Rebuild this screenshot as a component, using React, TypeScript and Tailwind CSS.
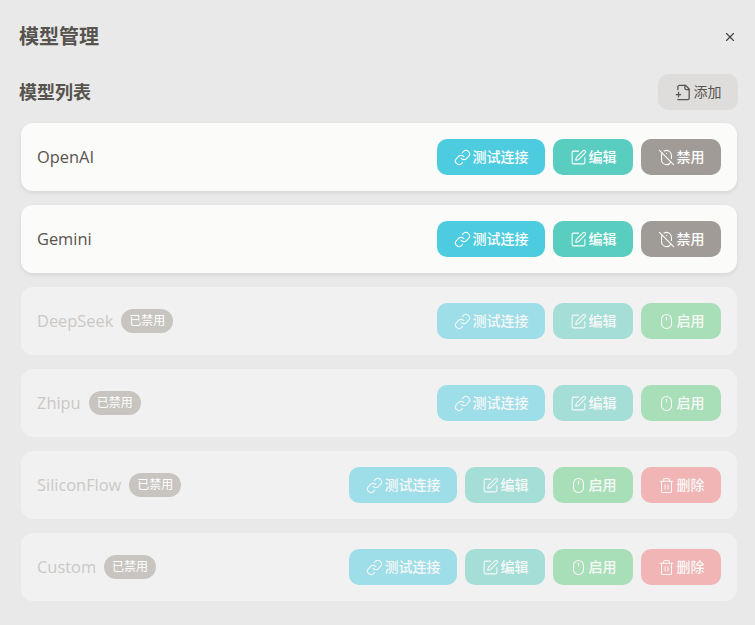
import { Link, Mouse, MouseOff, SquarePen, Trash2, X } from "lucide-react";

const font = "font-['Open_Sans','Noto_Sans_CJK_SC',sans-serif]";

const models = [
  { name: "OpenAI", enabled: true, removable: false },
  { name: "Gemini", enabled: true, removable: false },
  { name: "DeepSeek", enabled: false, removable: false },
  { name: "Zhipu", enabled: false, removable: false },
  { name: "SiliconFlow", enabled: false, removable: true },
  { name: "Custom", enabled: false, removable: true },
];

const ActionButton = ({ icon: Icon, label, color, width }: any) => (
  <button
    className={`${color} ${width} h-9 rounded-[10px] flex items-center justify-center gap-0.5 text-white text-sm font-medium`}
  >
    <Icon className="h-[17px] w-[17px]" strokeWidth={1.5} />
    <span>{label}</span>
  </button>
);

const ModelRow = ({ model }: any) => (
  <div
    className={`h-[68px] rounded-xl pl-4 pr-4 flex items-center justify-between ${
      model.enabled ? "bg-[#fbfbf9] shadow-[0_2px_4px_rgba(0,0,0,0.08)]" : "bg-[#f1f1f1]"
    }`}
  >
    <div className="flex items-center gap-2">
      <span className={`text-[16.4px] ${model.enabled ? "text-[#57534e]" : "text-[#cbc8c5]"}`}>
        {model.name}
      </span>
      {!model.enabled && (
        <span className="h-6 w-[52px] rounded-full bg-[#c8c5c1] text-white text-xs flex items-center justify-center">
          已禁用
        </span>
      )}
    </div>
    <div className={`flex gap-2 ${model.enabled ? "" : "opacity-50"}`}>
      <ActionButton icon={Link} label="测试连接" color="bg-[#4dcce0]" width="w-[108px]" />
      <ActionButton icon={SquarePen} label="编辑" color="bg-[#59cdbf]" width="w-20" />
      {model.enabled ? (
        <ActionButton icon={MouseOff} label="禁用" color="bg-[#a09b96]" width="w-20" />
      ) : (
        <ActionButton icon={Mouse} label="启用" color="bg-[#62cf80]" width="w-20" />
      )}
      {model.removable && (
        <ActionButton icon={Trash2} label="删除" color="bg-[#f07a78]" width="w-20" />
      )}
    </div>
  </div>
);

export default function App() {
  return (
    <div className={`${font} w-[755px] h-[625px] bg-[#e9e9e9] overflow-hidden`}>
      <div className="h-[74px] pl-[19px] pr-[18px] flex items-center justify-between">
        <h1 className="text-xl font-bold text-[#57534e]">模型管理</h1>
        <X className="h-[14px] w-[14px] text-[#44403c]" strokeWidth={2} />
      </div>
      <div className="pl-[19px] pr-[17px] flex items-center justify-between h-9">
        <h2 className="text-lg font-bold text-[#57534e]">模型列表</h2>
        <button className="w-20 h-9 rounded-[10px] bg-[#dedddb] flex items-center justify-center gap-0.5 text-sm text-[#57534e]">
          {/* file with the plus on its left edge */}
          <svg
            className="h-[17px] w-[17px]"
            viewBox="0 0 24 24"
            fill="none"
            stroke="currentColor"
            strokeWidth={1.8}
            strokeLinecap="round"
            strokeLinejoin="round"
          >
            <path d="M4 22h14a2 2 0 0 0 2-2V7l-5-5H6a2 2 0 0 0-2 2v4" />
            <path d="M14 2v4a2 2 0 0 0 2 2h4" />
            <path d="M2 15h6" />
            <path d="M5 12v6" />
          </svg>
          添加
        </button>
      </div>
      <div className="mt-[13px] ml-[21px] mr-[18px] flex flex-col gap-[14px]">
        {models.map((model) => (
          <ModelRow key={model.name} model={model} />
        ))}
      </div>
    </div>
  );
}
